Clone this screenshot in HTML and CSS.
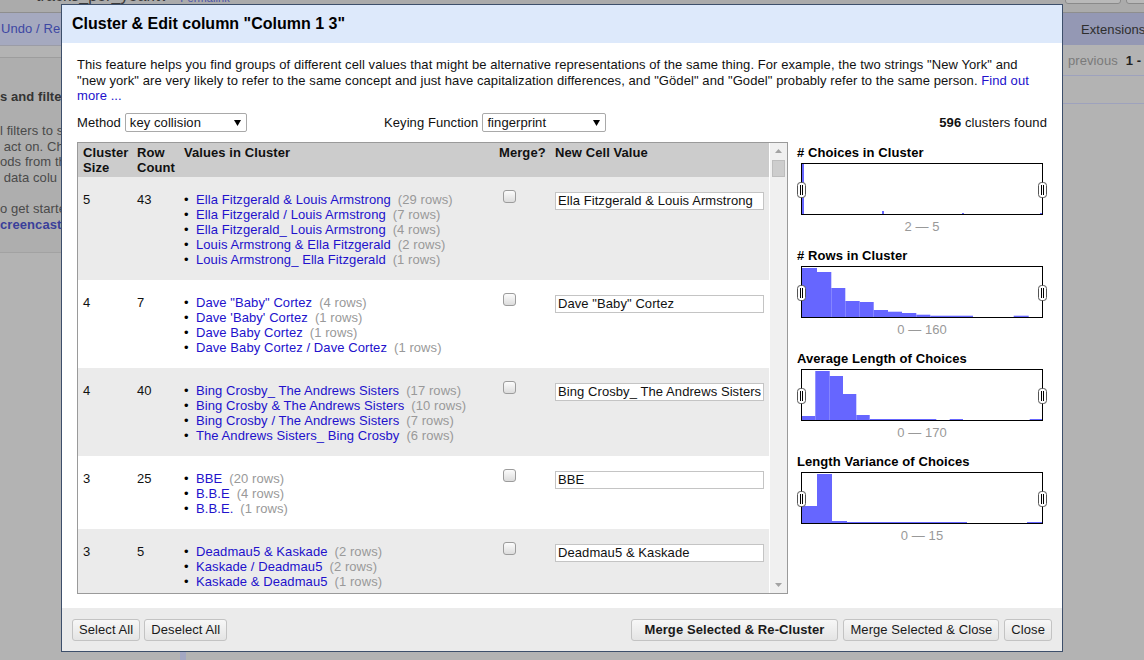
FILE: index.html
```html
<!DOCTYPE html>
<html lang="en">
<head>
<meta charset="utf-8">
<title>Cluster &amp; Edit</title>
<link rel="stylesheet" href="styles.css">
</head>
<body>
<div class="page">
  <header class="topstrip">
    <span class="proj-name">tracks_per_year.tv</span>
    <span class="permalink">Permalink</span>
    <span class="top-btns"><span class="top-btn top-btn-a"></span><span class="top-btn top-btn-b"></span></span>
  </header>
  <div class="workspace">
    <aside class="left">
      <div class="undo-tab"><span class="undo-text">Undo / Re</span></div>
      <div class="left-tabs"></div>
      <div class="help">
        <div class="help-clip">
          <div class="help-title">s and filte</div>
          <div class="help-line">l filters to s</div>
          <div class="help-line"> act on. Ch</div>
          <div class="help-line">ods from th</div>
          <div class="help-line"> data colu</div>
          <div class="help-line help-gap">o get starte</div>
          <div class="help-link">creencasts</div>
        </div>
      </div>
      <div class="left-rest"></div>
    </aside>
    <main class="center">
      <div class="toolbar"><span class="ext">Extensions</span></div>
      <div class="viewbar"><span class="pager"><span class="prev">previous</span><b class="range">1 - 1</b></span></div>
      <div class="rowbar"></div>
    </main>
  </div>
</div>

<div class="dialog">
  <div class="dialog-header">Cluster &amp; Edit column "Column 1 3"</div>
  <div class="dialog-body">
    <p class="desc">This feature helps you find groups of different cell values that might be alternative representations of the same thing. For example, the two strings "New York" and "new york" are very likely to refer to the same concept and just have capitalization differences, and "Gödel" and "Godel" probably refer to the same person. <a class="link">Find out more ...</a></p>
    <div class="controls">
      <div class="ctl">Method <span class="select sel-method"><span>key collision</span><svg class="caret" width="7" height="6" viewBox="0 0 7 6"><polygon points="0,0 7,0 3.5,6" fill="#000"/></svg></span></div>
      <div class="ctl">Keying Function <span class="select sel-key"><span>fingerprint</span><svg class="caret" width="7" height="6" viewBox="0 0 7 6"><polygon points="0,0 7,0 3.5,6" fill="#000"/></svg></span></div>
      <div class="found"><b>596</b> clusters found</div>
    </div>
    <div class="main">
      <div class="table-wrap">
        <div class="table-scroll">
          <table class="clusters">
            <colgroup><col class="c1"><col class="c2"><col class="c3"><col class="c4"><col class="c5"></colgroup>
            <thead>
              <tr><th>Cluster<br>Size</th><th>Row<br>Count</th><th>Values in Cluster</th><th>Merge?</th><th>New Cell Value</th></tr>
            </thead>
            <tbody>
              <tr class="odd">
                <td>5</td><td>43</td>
                <td><ul class="values">
                  <li><a class="link">Ella Fitzgerald &amp; Louis Armstrong</a><span class="count">(29 rows)</span></li>
                  <li><a class="link">Ella Fitzgerald / Louis Armstrong</a><span class="count">(7 rows)</span></li>
                  <li><a class="link">Ella Fitzgerald_ Louis Armstrong</a><span class="count">(4 rows)</span></li>
                  <li><a class="link">Louis Armstrong &amp; Ella Fitzgerald</a><span class="count">(2 rows)</span></li>
                  <li><a class="link">Louis Armstrong_ Ella Fitzgerald</a><span class="count">(1 rows)</span></li>
                </ul></td>
                <td><span class="cb"></span></td>
                <td><input class="newval" type="text" value="Ella Fitzgerald &amp; Louis Armstrong"></td>
              </tr>
              <tr class="even">
                <td>4</td><td>7</td>
                <td><ul class="values">
                  <li><a class="link">Dave "Baby" Cortez</a><span class="count">(4 rows)</span></li>
                  <li><a class="link">Dave 'Baby' Cortez</a><span class="count">(1 rows)</span></li>
                  <li><a class="link">Dave Baby Cortez</a><span class="count">(1 rows)</span></li>
                  <li><a class="link">Dave Baby Cortez / Dave Cortez</a><span class="count">(1 rows)</span></li>
                </ul></td>
                <td><span class="cb"></span></td>
                <td><input class="newval" type="text" value="Dave &quot;Baby&quot; Cortez"></td>
              </tr>
              <tr class="odd">
                <td>4</td><td>40</td>
                <td><ul class="values">
                  <li><a class="link">Bing Crosby_ The Andrews Sisters</a><span class="count">(17 rows)</span></li>
                  <li><a class="link">Bing Crosby &amp; The Andrews Sisters</a><span class="count">(10 rows)</span></li>
                  <li><a class="link">Bing Crosby / The Andrews Sisters</a><span class="count">(7 rows)</span></li>
                  <li><a class="link">The Andrews Sisters_ Bing Crosby</a><span class="count">(6 rows)</span></li>
                </ul></td>
                <td><span class="cb"></span></td>
                <td><input class="newval" type="text" value="Bing Crosby_ The Andrews Sisters"></td>
              </tr>
              <tr class="even">
                <td>3</td><td>25</td>
                <td><ul class="values">
                  <li><a class="link">BBE</a><span class="count">(20 rows)</span></li>
                  <li><a class="link">B.B.E</a><span class="count">(4 rows)</span></li>
                  <li><a class="link">B.B.E.</a><span class="count">(1 rows)</span></li>
                </ul></td>
                <td><span class="cb"></span></td>
                <td><input class="newval" type="text" value="BBE"></td>
              </tr>
              <tr class="odd">
                <td>3</td><td>5</td>
                <td><ul class="values">
                  <li><a class="link">Deadmau5 &amp; Kaskade</a><span class="count">(2 rows)</span></li>
                  <li><a class="link">Kaskade / Deadmau5</a><span class="count">(2 rows)</span></li>
                  <li><a class="link">Kaskade &amp; Deadmau5</a><span class="count">(1 rows)</span></li>
                </ul></td>
                <td><span class="cb"></span></td>
                <td><input class="newval" type="text" value="Deadmau5 &amp; Kaskade"></td>
              </tr>
            </tbody>
          </table>
        </div>
        <div class="vscroll">
          <div class="sb-btn"><svg width="7" height="4" viewBox="0 0 7 4"><polygon points="0,4 3.5,0 7,4" fill="#a3a3a3"/></svg></div>
          <div class="sb-thumb"></div>
          <div class="sb-space"></div>
          <div class="sb-btn"><svg width="7" height="4" viewBox="0 0 7 4"><polygon points="0,0 3.5,4 7,0" fill="#a3a3a3"/></svg></div>
        </div>
      </div>

      <div class="facets">
        <section class="facet">
          <div class="facet-title"># Choices in Cluster</div>
          <div class="hist">
            <svg class="hist-svg" width="240" height="50" viewBox="0 0 240 50"><g fill="#6666ff">
              <rect x="0" y="0" width="2" height="50"/><rect x="80" y="47" width="2" height="3"/><rect x="160" y="49" width="2" height="1"/><rect x="238" y="49" width="2" height="1"/>
            </g></svg>
            <span class="handle handle-l"><svg width="9" height="16" viewBox="0 0 9 16"><rect x="0.5" y="0.5" width="8" height="15" rx="3" fill="#fff" stroke="#555"/><path d="M3.5 3v10M5.5 3v10" stroke="#000"/></svg></span>
            <span class="handle handle-r"><svg width="9" height="16" viewBox="0 0 9 16"><rect x="0.5" y="0.5" width="8" height="15" rx="3" fill="#fff" stroke="#555"/><path d="M3.5 3v10M5.5 3v10" stroke="#000"/></svg></span>
          </div>
          <div class="facet-range">2 — 5</div>
        </section>
        <section class="facet">
          <div class="facet-title"># Rows in Cluster</div>
          <div class="hist">
            <svg class="hist-svg" width="240" height="50" viewBox="0 0 240 50"><g fill="#6666ff">
              <rect x="0" y="1" width="15" height="49"/><rect x="15" y="5" width="14.3" height="45"/><rect x="29.3" y="21" width="14" height="29"/><rect x="43.3" y="34" width="14.4" height="16"/><rect x="57.7" y="35" width="14" height="15"/><rect x="71.7" y="43" width="14.3" height="7"/><rect x="86" y="44.7" width="14" height="5.3"/><rect x="100" y="46" width="14.3" height="4"/><rect x="114.3" y="47.7" width="14" height="2.3"/><rect x="128.3" y="48.7" width="42.7" height="1.3"/><rect x="211.7" y="48.7" width="15" height="1.3"/>
            </g></svg>
            <span class="handle handle-l"><svg width="9" height="16" viewBox="0 0 9 16"><rect x="0.5" y="0.5" width="8" height="15" rx="3" fill="#fff" stroke="#555"/><path d="M3.5 3v10M5.5 3v10" stroke="#000"/></svg></span>
            <span class="handle handle-r"><svg width="9" height="16" viewBox="0 0 9 16"><rect x="0.5" y="0.5" width="8" height="15" rx="3" fill="#fff" stroke="#555"/><path d="M3.5 3v10M5.5 3v10" stroke="#000"/></svg></span>
          </div>
          <div class="facet-range">0 — 160</div>
        </section>
        <section class="facet">
          <div class="facet-title">Average Length of Choices</div>
          <div class="hist">
            <svg class="hist-svg" width="240" height="50" viewBox="0 0 240 50"><g fill="#6666ff">
              <rect x="0" y="46" width="13.3" height="4"/><rect x="13.3" y="1" width="14.4" height="49"/><rect x="27.7" y="6" width="13.3" height="44"/><rect x="41" y="24" width="13.3" height="26"/><rect x="54.3" y="45" width="13.4" height="5"/><rect x="67.7" y="49" width="66.6" height="1"/><rect x="147.7" y="49" width="13.3" height="1"/><rect x="227.7" y="49" width="12.3" height="1"/>
            </g></svg>
            <span class="handle handle-l"><svg width="9" height="16" viewBox="0 0 9 16"><rect x="0.5" y="0.5" width="8" height="15" rx="3" fill="#fff" stroke="#555"/><path d="M3.5 3v10M5.5 3v10" stroke="#000"/></svg></span>
            <span class="handle handle-r"><svg width="9" height="16" viewBox="0 0 9 16"><rect x="0.5" y="0.5" width="8" height="15" rx="3" fill="#fff" stroke="#555"/><path d="M3.5 3v10M5.5 3v10" stroke="#000"/></svg></span>
          </div>
          <div class="facet-range">0 — 170</div>
        </section>
        <section class="facet">
          <div class="facet-title">Length Variance of Choices</div>
          <div class="hist">
            <svg class="hist-svg" width="240" height="50" viewBox="0 0 240 50"><g fill="#6666ff">
              <rect x="0" y="33" width="15" height="17"/><rect x="15" y="1" width="15" height="49"/><rect x="30" y="48" width="15" height="2"/><rect x="45" y="49" width="120" height="1"/><rect x="225" y="49" width="15" height="1"/>
            </g></svg>
            <span class="handle handle-l"><svg width="9" height="16" viewBox="0 0 9 16"><rect x="0.5" y="0.5" width="8" height="15" rx="3" fill="#fff" stroke="#555"/><path d="M3.5 3v10M5.5 3v10" stroke="#000"/></svg></span>
            <span class="handle handle-r"><svg width="9" height="16" viewBox="0 0 9 16"><rect x="0.5" y="0.5" width="8" height="15" rx="3" fill="#fff" stroke="#555"/><path d="M3.5 3v10M5.5 3v10" stroke="#000"/></svg></span>
          </div>
          <div class="facet-range">0 — 15</div>
        </section>
      </div>
    </div>
  </div>
  <div class="dialog-footer">
    <div class="btn-group btn-group-left">
      <button class="btn" type="button">Select All</button>
      <button class="btn" type="button">Deselect All</button>
    </div>
    <div class="btn-group">
      <button class="btn btn-primary" type="button">Merge Selected &amp; Re-Cluster</button>
      <button class="btn" type="button">Merge Selected &amp; Close</button>
      <button class="btn" type="button">Close</button>
    </div>
  </div>
</div>
</body>
</html>
```

FILE: styles.css
```css
* { box-sizing: border-box; }
html, body { margin: 0; padding: 0; }
body {
  width: 1144px;
  height: 660px;
  overflow: hidden;
  position: relative;
  background: #b3b3b3;
  font-family: "Liberation Sans", Arial, sans-serif;
  font-size: 13px;
  letter-spacing: 0.08px;
  color: #000;
}

/* ---------- background application (dimmed) ---------- */
.page { height: 660px; display: flex; flex-direction: column; }
.topstrip {
  height: 13px;
  background: #ababab;
  border-bottom: 1px solid #8e8e8e;
  display: flex;
  align-items: flex-start;
  overflow: hidden;
  white-space: nowrap;
}
.proj-name { font-size: 16px; color: #3a3a3a; margin: -13px 0 0 36px; line-height: 18px; }
.permalink { font-size: 11px; color: #4a52a8; margin: -9px 0 0 12px; line-height: 14px; }
.top-btns { margin-left: auto; display: flex; gap: 5px; margin-right: -20px; }
.top-btn { height: 14px; margin-top: -10px; border: 1px solid #8a8a8a; border-radius: 3px; background: #b9b9b9; }
.top-btn-a { width: 56px; }
.top-btn-b { width: 38px; }

.workspace { flex: 1; display: flex; min-height: 0; }
.left { width: 186px; display: flex; flex-direction: column; }
.undo-tab {
  height: 32px;
  line-height: 32px;
  background: #a5a9bf;
  width: 180px;
  padding-left: 1px;
}
.undo-text { display: block; width: 60px; overflow: hidden; white-space: nowrap; color: #3d47a3; }
.left-tabs { height: 13px; width: 180px; border-top: 1px solid #9b9ca6; border-bottom: 1px solid #9d9d9d; }
.help {
  width: 180px;
  height: 195px;
  padding-top: 31px;
  background: #aeaeae;
  border-bottom: 1px solid #a2a2a2;
}
.help-clip { width: 61px; overflow: hidden; white-space: nowrap; }
.help-title { font-weight: bold; color: #343434; line-height: 16px; margin-bottom: 18px; }
.help-line { color: #4a4a4a; line-height: 15.6px; white-space: pre; }
.help-gap { margin-top: 16px; }
.help-link { color: #3a3f9a; font-weight: bold; line-height: 15.6px; }
.left-rest { flex: 1; width: 186px; border-right: 6px solid #a3a7c3; }

.center { flex: 1; display: flex; flex-direction: column; }
.toolbar {
  height: 32px;
  background: #9498b4;
  display: flex;
  justify-content: flex-end;
  align-items: center;
}
.ext { width: 63px; overflow: hidden; white-space: nowrap; color: #2e2e2e; }
.viewbar {
  height: 31px;
  border-bottom: 1px solid #9ea2bd;
  display: flex;
  justify-content: flex-end;
  align-items: center;
}
.pager { width: 76px; overflow: hidden; white-space: nowrap; }
.prev { color: #7a7a7a; }
.range { color: #222; margin-left: 8px; }
.rowbar { height: 28px; border-bottom: 1px solid #9ea2bd; }

/* ---------- dialog ---------- */
.dialog {
  position: absolute;
  left: 61px;
  top: 4px;
  width: 1002px;
  height: 648px;
  border: 1px solid #3d4f6b;
  background: #fff;
  display: flex;
  flex-direction: column;
}
.dialog-header {
  height: 38px;
  flex: none;
  background: #dde9fb;
  padding-left: 10px;
  display: flex;
  align-items: center;
  font-size: 16px;
  font-weight: bold;
  letter-spacing: 0;
  color: #000;
}
.dialog-body {
  flex: 1;
  min-height: 0;
  padding: 14px 15px 14px 15px;
  display: flex;
  flex-direction: column;
}
.desc { margin: 0; padding-right: 12px; line-height: 15.6px; color: #111; }
.link { color: #2211cc; text-decoration: none; cursor: pointer; }

.controls {
  margin-top: 9px;
  height: 20px;
  display: grid;
  grid-template-columns: 307px 1fr auto;
  align-items: center;
}
.ctl { display: flex; align-items: center; gap: 4px; color: #111; }
.select {
  display: inline-flex;
  align-items: center;
  justify-content: space-between;
  height: 19px;
  border: 1px solid #a9a9a9;
  border-radius: 2px;
  background: #fff;
  padding: 0 5px 0 4px;
}
.sel-method { width: 122px; }
.sel-key { width: 124px; }
.caret { display: block; }
.found { color: #111; }

.main {
  flex: 1;
  min-height: 0;
  margin-top: 9px;
  display: flex;
  gap: 9px;
}
.table-wrap {
  width: 711px;
  border: 1px solid #9a9a9a;
  display: flex;
}
.table-scroll { flex: 1; overflow: hidden; }
.clusters {
  width: 691px;
  table-layout: fixed;
  border-collapse: collapse;
}
.c1 { width: 54px; }
.c2 { width: 47px; }
.c3 { width: 315px; }
.c4 { width: 56px; }
.c5 { width: 219px; }
.clusters th {
  background: #cccccc;
  text-align: left;
  vertical-align: top;
  font-weight: bold;
  line-height: 15px;
  padding: 2px 5px;
  color: #111;
}
.clusters td {
  vertical-align: top;
  line-height: 15px;
  padding: 15px 5px 13px;
  color: #111;
}
.clusters tr.odd td { background: #ebebeb; }
.clusters tr.even td { background: #fff; }
.values { list-style: none; margin: 0; padding: 0; white-space: nowrap; }
.values li::before { content: "•"; display: inline-block; width: 12px; color: #000; }
.count { color: #999; margin-left: 7px; }
.cb {
  display: block;
  width: 13px;
  height: 13px;
  margin: -2px 0 0 4px;
  border: 1px solid #9c9c9c;
  border-radius: 3px;
  background: linear-gradient(#fcfcfc, #dcdcdc);
}
.newval {
  display: block;
  width: 209px;
  height: 18px;
  margin: 0;
  padding: 0 2px;
  border: 1px solid #c4c4c4;
  font-family: "Liberation Sans", Arial, sans-serif;
  font-size: 13px;
  letter-spacing: 0.08px;
  color: #111;
  background: #fff;
}

.vscroll {
  width: 17px;
  background: #f0f0f0;
  display: flex;
  flex-direction: column;
}
.sb-btn { height: 17px; display: flex; align-items: center; justify-content: center; }
.sb-btn svg { display: block; }
.sb-thumb { height: 17px; margin: 0 2px; background: #cdcdcd; border: 1px solid #bdbdbd; }
.sb-space { flex: 1; }

.facets { width: 250px; padding-top: 3px; }
.facet { margin-bottom: 14px; }
.facet-title { font-weight: bold; line-height: 15px; margin-bottom: 3px; color: #000; }
.hist {
  position: relative;
  width: 242px;
  height: 52px;
  margin-left: 4px;
  border: 1px solid #000;
}
.hist-svg { display: block; }
.handle { position: absolute; top: 18px; width: 9px; height: 16px; }
.handle svg { display: block; }
.handle-l { left: -5px; }
.handle-r { right: -5px; }
.facet-range {
  width: 242px;
  margin-left: 4px;
  margin-top: 4px;
  line-height: 15px;
  text-align: center;
  color: #999;
}

.dialog-footer {
  height: 43px;
  flex: none;
  background: #ebebeb;
  padding: 0 10px;
  display: flex;
  align-items: center;
  justify-content: space-between;
}
.btn-group { display: flex; gap: 5px; }
.btn-group-left { gap: 4px; }
.btn {
  height: 22px;
  padding: 0 6px;
  border: 1px solid #c3c3c3;
  border-radius: 3px;
  background: linear-gradient(#f7f7f7, #e4e4e4);
  font-family: "Liberation Sans", Arial, sans-serif;
  font-size: 13px;
  letter-spacing: 0.08px;
  color: #1a1a1a;
  line-height: 20px;
}
.btn-primary { font-weight: bold; padding: 0 13px; }
```
